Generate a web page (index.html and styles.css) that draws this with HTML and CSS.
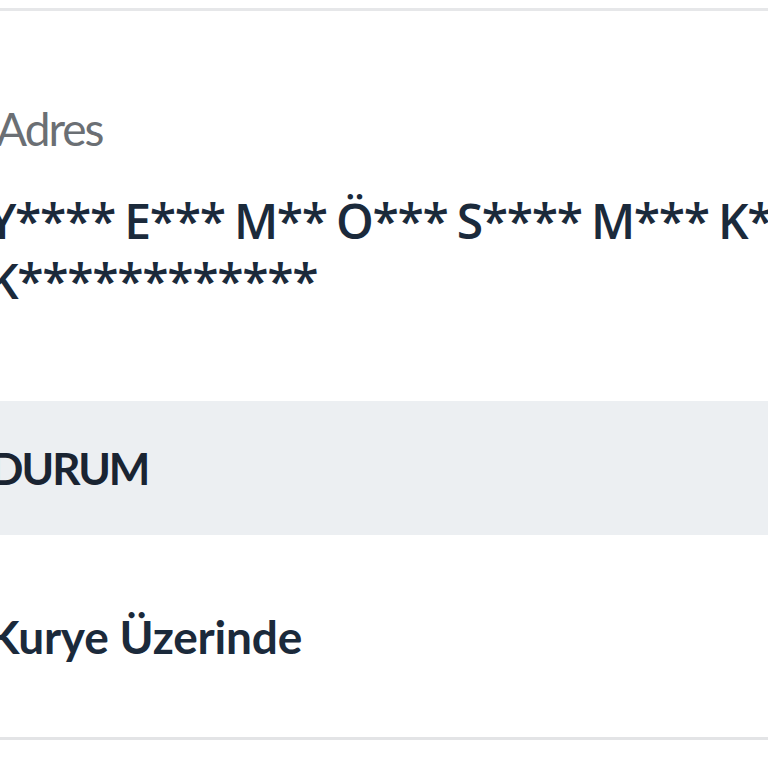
FILE: index.html
```html
<!DOCTYPE html>
<html lang="tr">
<head>
  <meta charset="UTF-8">
  <meta name="viewport" content="width=device-width, initial-scale=1.0">
  <title>Sipariş Detayı</title>
  <link rel="stylesheet" href="styles.css">
</head>
<body>
  <div class="detail_wrapper">
    <div class="detail_block">
      <div class="detail_label">Adres</div>
      <div class="detail_value detail_address">Y**** E*** M** Ö*** S**** M*** K*** K************</div>
    </div>
    <div class="detail_header">DURUM</div>
    <div class="detail_block detail_status">
      <div class="detail_value">Kurye Üzerinde</div>
    </div>
  </div>
</body>
</html>
```

FILE: styles.css
```css
html, body {
  margin: 0;
  padding: 0;
  background-color: #fff;
  overflow: hidden;
}
body {
  font-family: "Lato", "Liberation Sans", sans-serif;
}
.detail_wrapper {
  margin-top: 8px;
  margin-left: -12px;
  width: 900px;
  border-top: 3px solid #e6e7e9;
  border-bottom: 3px solid #e3e4e6;
}
.detail_block {
  padding: 90px 0 0 0;
}
.detail_label {
  font-size: 46px;
  color: #6b6f74;
  line-height: 56px;
  letter-spacing: -2px;
  padding-left: 8px;
}
.detail_value {
  font-size: 46px;
  font-weight: 700;
  color: #1b2a3b;
  line-height: 60px;
  letter-spacing: -0.2px;
}
.detail_address {
  font-family: "Open Sans", "Lato", sans-serif;
  font-weight: 600;
  font-size: 48px;
  letter-spacing: -1.3px;
  word-spacing: -2px;
  margin-top: 34px;
  width: 880px;
}
.detail_header {
  margin-top: 90px;
  height: 134px;
  line-height: 134px;
  background-color: #eceff2;
  font-size: 44px;
  font-weight: 700;
  color: #1a2432;
  letter-spacing: -2px;
  padding-left: 2px;
}
.detail_status {
  padding: 72px 0 70px 0;
}
```
